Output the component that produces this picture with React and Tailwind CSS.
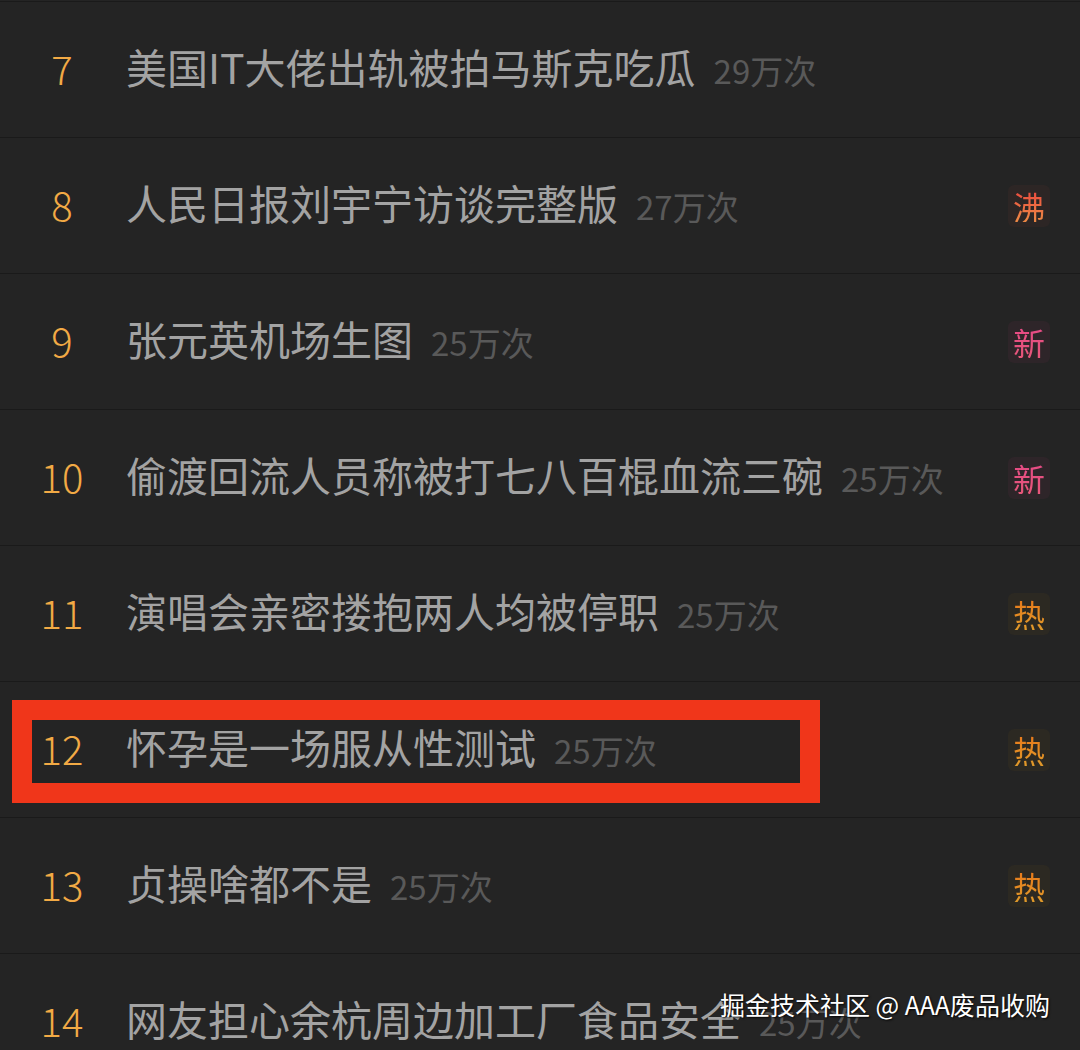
import React from 'react';

const rows = [
  { rank: 7, title: '美国IT大佬出轨被拍马斯克吃瓜', count: '29万次', tag: null },
  { rank: 8, title: '人民日报刘宇宁访谈完整版', count: '27万次', tag: 'boil' },
  { rank: 9, title: '张元英机场生图', count: '25万次', tag: 'new' },
  { rank: 10, title: '偷渡回流人员称被打七八百棍血流三碗', count: '25万次', tag: 'new' },
  { rank: 11, title: '演唱会亲密搂抱两人均被停职', count: '25万次', tag: 'hot' },
  { rank: 12, title: '怀孕是一场服从性测试', count: '25万次', tag: 'hot' },
  { rank: 13, title: '贞操啥都不是', count: '25万次', tag: 'hot' },
  { rank: 14, title: '网友担心余杭周边加工厂食品安全', count: '25万次', tag: null },
];

function Tag({ type }) {
  if (type === 'boil') {
    return (
      <div className="w-[42px] h-[42px] rounded-md bg-[#2d2625] flex items-center justify-center">
        <span className="text-[32px] leading-none bg-gradient-to-b from-[#e9473f] to-[#ee8a45] bg-clip-text text-transparent">沸</span>
      </div>
    );
  }
  if (type === 'new') {
    return (
      <div className="w-[42px] h-[42px] rounded-md bg-[#2e2529] flex items-center justify-center">
        <span className="text-[32px] leading-none bg-gradient-to-b from-[#e64a86] to-[#e8577a] bg-clip-text text-transparent">新</span>
      </div>
    );
  }
  if (type === 'hot') {
    return (
      <div className="w-[42px] h-[42px] rounded-md bg-[#2c2922] flex items-center justify-center">
        <span className="text-[32px] leading-none bg-gradient-to-b from-[#e8781a] to-[#e09a2a] bg-clip-text text-transparent">热</span>
      </div>
    );
  }
  return null;
}

export default function App() {
  return (
    <div
      className="relative w-[1080px] h-[1050px] overflow-hidden bg-[#242424]"
      style={{ fontFamily: '"Noto Sans CJK SC", "Noto Sans", sans-serif' }}
    >
      <div className="pt-px">
        {rows.map((row) => (
          <div key={row.rank} className="flex items-center h-[136px] border-t border-[#1a1a1a] pr-[30px]">
            <div className="w-[124px] pb-[4px] text-center text-[40px] font-light text-[#f2aa45] leading-none">
              {row.rank}
            </div>
            <div className="flex-1 flex items-baseline min-w-0 pb-[6px] pl-[2px]">
              <span className="text-[41px] text-[#a3a3a3] leading-none whitespace-nowrap">{row.title}</span>
              <span className="ml-[18px] text-[33px] text-[#595959] leading-none whitespace-nowrap">{row.count}</span>
            </div>
            <Tag type={row.tag} />
          </div>
        ))}
      </div>

      {/* highlight box drawn over row 12 */}
      <div className="absolute left-[12px] top-[700px] w-[808px] h-[103px] border-[20px] border-[#f0361a]" />

      {/* watermark */}
      <div className="absolute right-[30px] top-[992px] text-[25px] text-white leading-none whitespace-nowrap [text-shadow:1px_1px_2px_rgba(0,0,0,0.9)]">
        掘金技术社区 @ AAA废品收购
      </div>
    </div>
  );
}
